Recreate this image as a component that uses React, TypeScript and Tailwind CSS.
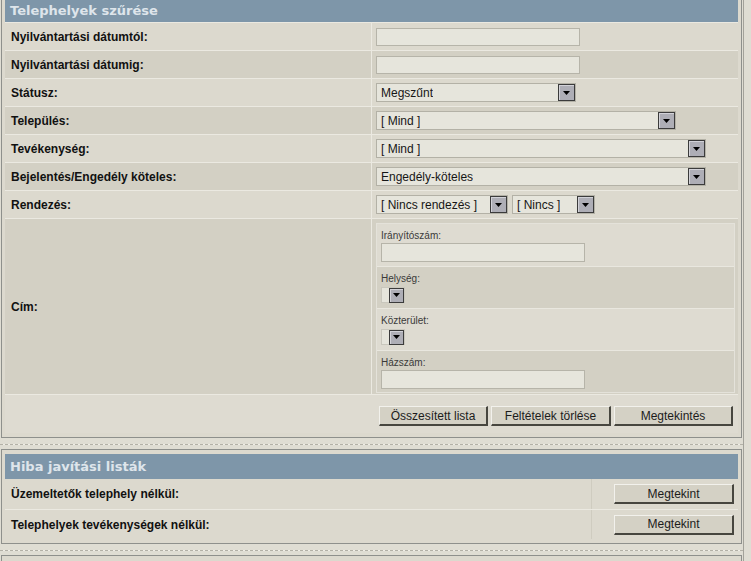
import React from 'react';

const LIGHT = 'bg-[#dcd9ce]';
const DARK = 'bg-[#d3d0c4]';

function Arrow({ small }: { small?: boolean }) {
  return (
    <span
      className={
        (small ? 'w-[15px] h-[15px]' : 'w-[17px] h-[17px]') +
        ' flex shrink-0 items-center justify-center border border-[#3b3b3b] bg-[#aeaeb6] shadow-[inset_1px_1px_0_#d2d2d8]'
      }
    >
      <svg width="7" height="4" viewBox="0 0 7 4">
        <path d="M0 0h7L3.5 4z" fill="#000" />
      </svg>
    </span>
  );
}

function Select({ width, text }: { width: string; text: string }) {
  return (
    <div
      className={
        width +
        ' flex h-[19px] items-center justify-between border border-[#b3b1a6] bg-[#e6e5dc] pl-[4px] text-[12px] text-[#161616]'
      }
    >
      <span className="truncate">{text}</span>
      <Arrow />
    </div>
  );
}

function TinySelect() {
  return (
    <div className="flex h-[16px] w-[24px] items-center justify-end border border-[#c9c7bd] bg-[#e6e5dc]">
      <Arrow small />
    </div>
  );
}

function Input({ className = '' }: { className?: string }) {
  return <div className={'w-[204px] border border-[#b6b4a9] bg-[#e6e5dc] ' + className} />;
}

function Button({ width, children }: { width: string; children: React.ReactNode }) {
  return (
    <button
      className={
        width +
        ' h-[20px] border-t border-l border-[#f2f1ec] border-r-2 border-b-2 border-r-[#47463f] border-b-[#47463f] bg-[#d4d1c5] text-[12px] leading-none text-[#1c1c1c]'
      }
    >
      {children}
    </button>
  );
}

function Header({ title, h }: { title: string; h: string }) {
  return (
    <div
      className={
        h +
        " flex items-center bg-[#7e96a9] pl-[5px] font-['DejaVu_Sans',Verdana,sans-serif] text-[13px] font-bold text-[#dee5eb]"
      }
    >
      {title}
    </div>
  );
}

function Row({ label, bg, children }: { label: string; bg: string; children?: React.ReactNode }) {
  return (
    <div className={'flex h-[28px] border-t border-[#ebe9e1] ' + bg}>
      <div className="flex w-[366px] items-center pl-[6px] text-[12px] font-bold text-[#111]">{label}</div>
      <div className="flex flex-1 items-center gap-[4px] border-l border-[#ebe9e1] pl-[4px]">{children}</div>
    </div>
  );
}

function SubRow({ label, bg, children }: { label: string; bg: string; children: React.ReactNode }) {
  return (
    <div className={'h-[42px] border-t border-[#e9e7df] pl-[4px] pt-[6px] first:border-t-0 ' + bg}>
      <div className="text-[10px] leading-[12px] text-[#3a3a3a]">{label}</div>
      {children}
    </div>
  );
}

function Separator() {
  return <div className="mt-[6px] mb-[4px] h-px border-t border-dashed border-[#b3b1a7] bg-[#efede6]" />;
}

export default function App() {
  return (
    <div className="flex h-[561px] w-[751px] overflow-hidden bg-[#dfddd3] font-['Liberation_Sans',Arial,sans-serif]">
      <div className="w-[743px] shrink-0">
        {/* Telephelyek szűrése */}
        <div className="ml-px w-[741px] border border-t-0 border-[#8e908c] bg-[#dcd9ce] px-[3px] pb-[4px]">
          <Header title="Telephelyek szűrése" h="h-[22px]" />
          <Row label="Nyilvántartási dátumtól:" bg={LIGHT}>
            <Input className="h-[18px]" />
          </Row>
          <Row label="Nyilvántartási dátumig:" bg={DARK}>
            <Input className="h-[18px]" />
          </Row>
          <Row label="Státusz:" bg={LIGHT}>
            <Select width="w-[200px]" text="Megszűnt" />
          </Row>
          <Row label="Település:" bg={DARK}>
            <Select width="w-[300px]" text="[ Mind ]" />
          </Row>
          <Row label="Tevékenység:" bg={LIGHT}>
            <Select width="w-[330px]" text="[ Mind ]" />
          </Row>
          <Row label="Bejelentés/Engedély köteles:" bg={DARK}>
            <Select width="w-[330px]" text="Engedély-köteles" />
          </Row>
          <Row label="Rendezés:" bg={LIGHT}>
            <Select width="w-[132px]" text="[ Nincs rendezés ]" />
            <Select width="w-[83px]" text="[ Nincs ]" />
          </Row>
          <div className={'flex h-[176px] border-t border-[#ebe9e1] ' + DARK}>
            <div className="flex w-[366px] items-center pl-[6px] text-[12px] font-bold text-[#111]">Cím:</div>
            <div className="flex-1 border-l border-[#ebe9e1] pl-[4px] pr-[3px] pt-[4px]">
              <div className="border border-[#e4e2da]">
                <SubRow label="Irányítószám:" bg="bg-[#dedbd1]">
                  <Input className="mt-px h-[19px]" />
                </SubRow>
                <SubRow label="Helység:" bg="bg-[#d3d0c4]">
                  <div className="mt-[2px]">
                    <TinySelect />
                  </div>
                </SubRow>
                <SubRow label="Közterület:" bg="bg-[#dedbd1]">
                  <div className="mt-[2px]">
                    <TinySelect />
                  </div>
                </SubRow>
                <SubRow label="Házszám:" bg="bg-[#d3d0c4]">
                  <Input className="mt-px h-[19px]" />
                </SubRow>
              </div>
            </div>
          </div>
          <div className="flex h-[39px] items-start justify-end gap-[3px] border-t border-[#ebe9e1] bg-[#dedbd1] pr-[5px] pt-[11px]">
            <Button width="w-[109px]">Összesített lista</Button>
            <Button width="w-[120px]">Feltételek törlése</Button>
            <Button width="w-[119px]">Megtekintés</Button>
          </div>
        </div>

        <Separator />

        {/* Hiba javítási listák */}
        <div className="ml-px w-[741px] border border-[#8e908c] bg-[#dcd9ce] px-[3px] pt-[4px] pb-[4px]">
          <Header title="Hiba javítási listák" h="h-[25px]" />
          {['Üzemeltetők telephely nélkül:', 'Telephelyek tevékenységek nélkül:'].map((label, i) => (
            <div key={label} className={'flex h-[30px] bg-[#dcd9ce] ' + (i > 0 ? 'border-t border-[#ebe9e1]' : '')}>
              <div className="flex w-[586px] items-center pl-[6px] text-[12px] font-bold text-[#111]">{label}</div>
              <div className="flex flex-1 items-center justify-end border-l border-[#cfccc0] pr-[4px]">
                <Button width="w-[120px]">Megtekint</Button>
              </div>
            </div>
          ))}
        </div>

        <Separator />

        <div className="ml-px h-[20px] w-[741px] border border-[#8e908c] bg-[#dcd9ce]" />
      </div>
      <div className="w-px shrink-0 bg-[#a3a29a]" />
    </div>
  );
}
